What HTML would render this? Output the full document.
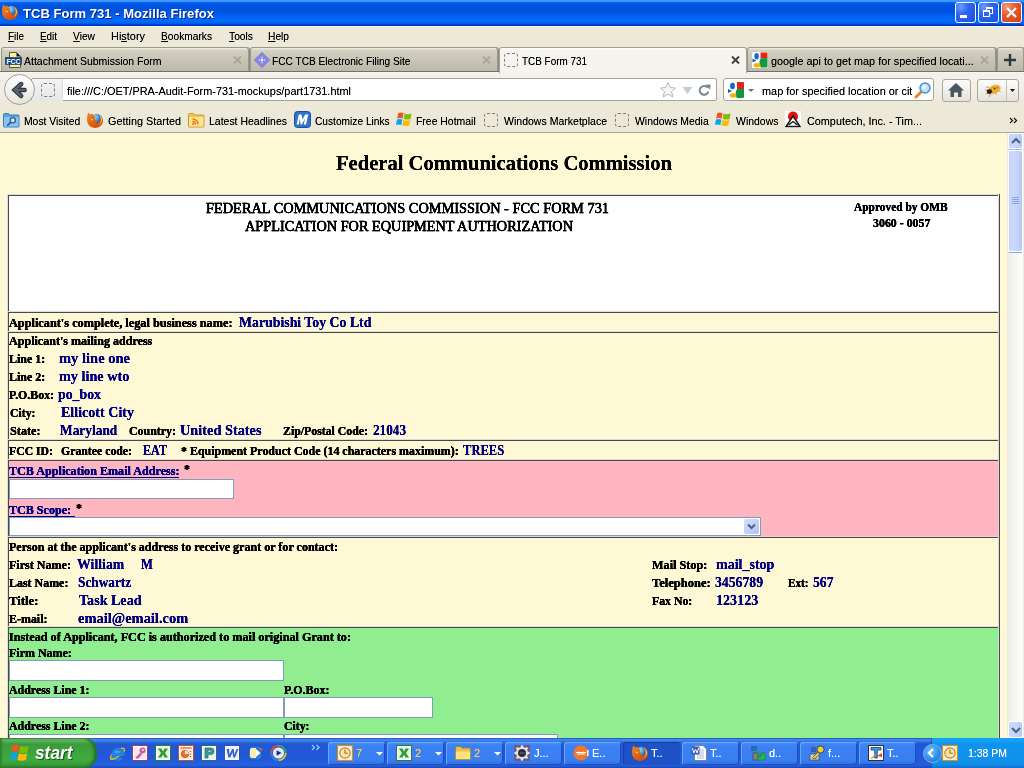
<!DOCTYPE html>
<html><head><meta charset="utf-8"><style>
html,body{margin:0;padding:0}
body{width:1024px;height:768px;overflow:hidden;position:relative;background:#ECE9D8;font-family:"Liberation Sans",sans-serif}
.a{position:absolute}
.tx{position:absolute;z-index:5;filter:url(#bo);white-space:pre;line-height:normal;transform-origin:0 0}
.tx u{text-decoration:underline}
.sf{-webkit-text-stroke:0.15px currentColor}
.ss{filter:url(#cr)}
/* title */
#title{left:0;top:0;width:1024px;height:26px;background:linear-gradient(to bottom,#4396ff 0,#3f92ff 1.5px,#0a6cff 2.2px,#005ee9 3px,#0055e0 5px,#0052dc 10px,#0057e4 13px,#0064f4 17px,#006bfd 20px,#0064f4 23px,#0052de 24px,#0034c4 25px,#0030c0 26px)}
.wb{position:absolute;top:2px;width:19px;height:19px;border:1px solid #fff;border-radius:3px;background:radial-gradient(circle at 25% 20%,#6f9cff 0,#2e67f0 35%,#1a4fdf 100%)}
#wclose{background:radial-gradient(circle at 25% 20%,#f59a7a 0,#e65a2e 40%,#d1400f 100%)}
/* menubar */
#menubar{left:0;top:26px;width:1024px;height:21px;background:linear-gradient(to bottom,#fcf8e8 0,#fcf8e8 1px,#ECE9D8 1px)}
/* tabs */
#tabbar{left:0;top:47px;width:1024px;height:25px;background:#ECE9D8}
.tab{position:absolute;top:47px;height:24px;border:1px solid #999789;border-bottom:none;border-radius:3px 3px 0 0;background:linear-gradient(to bottom,#ebe9de 0,#ebe9de 1px,#d4d1c3 2px,#c8c5b7 50%,#bcb9ab 100%);box-sizing:border-box;box-shadow:1px 0 0 #8e8c80}
#tabline{left:0;top:71px;width:1024px;height:1px;background:#73716a}
.tabsel{box-shadow:none;background:linear-gradient(to bottom,#fdfcf8 0,#fdfcf8 1px,#f5f4ee 2px);height:26px;border-color:#a3a193;z-index:2}
/* nav */
#nav{left:0;top:72px;width:1024px;height:35px;background:linear-gradient(to bottom,#fbfaf5 0,#f3f1ea 1px,#f1efe7 18px,#ECE9D8 30px)}
#bm{left:0;top:107px;width:1024px;height:25px;background:#ECE9D8}
#bmline{left:0;top:132px;width:1024px;height:1px;background:#aca899}
#content{left:0;top:133px;width:1007px;height:605px;background:#FFF8D4;overflow:hidden}
/* scrollbar */
#sb{left:1007px;top:133px;width:17px;height:605px;background:linear-gradient(to right,#ecebe3 0,#f4f3ee 35%,#fdfdfa 90%,#e9e9e1 100%)}
.sbb{position:absolute;left:2px;width:13px;border-radius:2px;background:linear-gradient(to right,#c3d2fa 0,#ccd9fc 30%,#c2d3fb 70%,#b0c6f8 100%);box-shadow:0 0 0 1px #fff}
/* taskbar */
#task{left:0;top:738px;width:1024px;height:30px;background:linear-gradient(to bottom,#2a5ccf 0,#2a5ccf 1px,#3c88e6 1px,#3b84e2 3px,#2d6cda 4px,#2157d5 6px,#2258d8 20px,#2461e0 27px,#1f52c8 29px,#1a45b0 30px)}
#start{left:0;top:738px;width:97px;height:30px;border-radius:0 13px 13px 0;background:linear-gradient(to bottom,#2f7d3a 0,#71b971 1px,#5cb05c 3px,#3a9b3a 6px,#3ea63e 16px,#40aa40 22px,#379a37 27px,#2c7f2c 30px);box-shadow:inset -3px 0 3px #22702a, inset 2px 0 2px #2a8a2a}
.tb{position:absolute;top:742px;height:23px;border-radius:3px;background:linear-gradient(to bottom,#4a8df8 0,#3c81f3 4px,#3a7ff1 18px,#306ee0 23px);box-shadow:inset 1px 1px 0 #6aa5ff,inset -1px -1px 0 #1d4fc4}
.tbact{background:#1e52c6;box-shadow:inset 1px 1px 1px #173f9c}
#tray{left:931px;top:738px;width:93px;height:30px;background:linear-gradient(to bottom,#1aa0f2 0,#14a4f6 2px,#0f94ee 6px,#1290e8 26px,#0f6fd0 30px);box-shadow:inset 1px 0 0 #1a5ac6}
/* table */
.hl{position:absolute;height:1px}
.vl{position:absolute;width:1px}
.inp{position:absolute;background:#fff;border:1px solid #7f9db9;box-sizing:border-box}
</style></head><body>
<svg width="0" height="0" style="position:absolute"><filter id="cr" x="-2%" y="-10%" width="104%" height="120%"><feComponentTransfer><feFuncA type="linear" slope="1.25" intercept="0"/></feComponentTransfer></filter><filter id="bo" x="-2%" y="-10%" width="104%" height="120%"><feComponentTransfer><feFuncA type="linear" slope="1.6" intercept="0"/></feComponentTransfer></filter></svg>
<div id="title" class="a"></div>
<div class="wb" style="left:955px"><div class="a" style="left:4px;top:12px;width:7px;height:3px;background:#fff"></div></div>
<div class="wb" style="left:978px"><div class="a" style="left:7px;top:4px;width:7px;height:7px;box-sizing:border-box;border:1px solid #fff;border-top-width:2px"></div><div class="a" style="left:4px;top:7px;width:7px;height:7px;box-sizing:border-box;border:1px solid #fff;border-top-width:2px;background:#3068ee"></div></div>
<div class="wb" id="wclose" style="left:1001px"><svg class="a" style="left:3px;top:3px" width="13" height="13"><path d="M2 2L11 11M11 2L2 11" stroke="#fff" stroke-width="2.2"/></svg></div>
<div id="menubar" class="a"></div>
<div id="tabbar" class="a"></div>
<div id="tabline" class="a"></div>
<div class="tab" style="left:1px;width:248px"></div>
<div class="tab" style="left:250px;width:248px"></div>
<div class="tab" style="left:747px;width:249px"></div>
<div class="tab" style="left:997px;width:27px"></div>
<div id="nav" class="a"></div>
<div class="tab tabsel" style="left:499px;width:248px"></div>
<svg class="a" style="left:233px;top:56px" width="10" height="8"><path d="M1 0.5L8 7.5M8 0.5L1 7.5" stroke="#a8a69c" stroke-width="1.9"/></svg>
<svg class="a" style="left:482px;top:56px" width="10" height="8"><path d="M1 0.5L8 7.5M8 0.5L1 7.5" stroke="#a8a69c" stroke-width="1.9"/></svg>
<svg class="a" style="left:731px;top:56px;z-index:4" width="10" height="8"><path d="M1 0.5L8 7.5M8 0.5L1 7.5" stroke="#3c3c3c" stroke-width="1.9"/></svg>
<svg class="a" style="left:980px;top:56px" width="10" height="8"><path d="M1 0.5L8 7.5M8 0.5L1 7.5" stroke="#a8a69c" stroke-width="1.9"/></svg>
<svg class="a" style="left:1003px;top:53px" width="14" height="14"><path d="M7 1V13M1 7H13" stroke="#2a3640" stroke-width="2.4"/></svg>
<!-- nav toolbar -->
<div class="a" style="left:31px;top:78px;width:684px;height:21px;border:1px solid #a6a397;border-radius:2px;background:#fff"></div>
<div class="a" style="left:32px;top:79px;width:30px;height:22px;background:linear-gradient(to bottom,#f4f4f4,#e6e6e6);border-right:1px solid #dcdcdc"></div>
<div class="a" style="left:4px;top:74px;width:29px;height:29px;border:1px solid #9f9d92;border-radius:50%;background:linear-gradient(to bottom,#ffffff 0,#f4f3ef 45%,#e6e4dc 100%)"></div>
<svg class="a" style="left:8px;top:78px" width="24" height="24" viewBox="0 0 24 24"><path d="M13.2 6L6.6 12L13.2 18M8.5 12H16.6" stroke="#202a33" stroke-width="4.4" fill="none" stroke-linecap="round" stroke-linejoin="miter"/><path d="M13.2 6L6.6 12L13.2 18M8.5 12H16.5" stroke="#56636e" stroke-width="2.6" fill="none" stroke-linecap="round" stroke-linejoin="miter"/></svg>
<svg class="a" style="left:659px;top:81px" width="18" height="18" viewBox="0 0 18 18"><path d="M9 1.5L11.2 6.5L16.5 7L12.5 10.5L13.8 16L9 13.2L4.2 16L5.5 10.5L1.5 7L6.8 6.5Z" fill="#f6f6f4" stroke="#b9bab6" stroke-width="1"/></svg>
<svg class="a" style="left:682px;top:86px" width="11" height="9"><path d="M0.5 1H10.5L5.5 8Z" fill="#c5cbd3"/></svg>
<svg class="a" style="left:698px;top:84px" width="13" height="12" viewBox="0 0 13 12"><path d="M9.6 3.6A4.4 4.4 0 1 0 10.4 7.4" stroke="#7a8791" stroke-width="2" fill="none"/><path d="M7.2 0.8L12.6 0.4L12.2 5.8Z" fill="#7a8791"/></svg>
<div class="a" style="left:723px;top:78px;width:209px;height:21px;border:1px solid #a6a397;border-radius:3px;background:#fff"></div>
<svg class="a" style="left:728px;top:82px" width="16" height="16" viewBox="0 0 16 16"><path d="M9 0H15Q16 0 16 1V7H9Z" fill="#e4231b"/><path d="M9 7H16V15Q16 16 15 16H9Q6 12 9 7Z" fill="#12963f"/><ellipse cx="4.5" cy="4" rx="2.4" ry="3.2" fill="#1066d2"/><path d="M0 7L4 9L0 11Z" fill="#1a5ab8"/><ellipse cx="5" cy="13.5" rx="3.3" ry="2.2" fill="#f2b50c"/></svg>
<svg class="a" style="left:748px;top:89px" width="6" height="3"><path d="M0 0H6L3 3Z" fill="#707070"/></svg>
<svg class="a" style="left:914px;top:81px" width="18" height="18" viewBox="0 0 18 18"><path d="M7 11L2 16" stroke="#e3862c" stroke-width="3" stroke-linecap="round"/><circle cx="11" cy="7" r="5" fill="#bfe2fb" stroke="#4a8fcc" stroke-width="1.5"/><circle cx="10" cy="6" r="2" fill="#eaf6ff"/></svg>
<div class="a" style="left:942px;top:79px;width:27px;height:21px;border:1px solid #aaa89c;border-radius:3px;background:linear-gradient(to bottom,#fdfcfa 0,#f1f0ea 50%,#e4e2d9 100%)"></div>
<svg class="a" style="left:948px;top:83px" width="16" height="14" viewBox="0 0 16 14"><path d="M8 0L16 7.5H13.5V14H10V9.5H6V14H2.5V7.5H0Z" fill="#4a5560"/></svg>
<div class="a" style="left:977px;top:79px;width:40px;height:21px;border:1px solid #aaa89c;border-radius:3px;background:linear-gradient(to bottom,#fdfcfa 0,#f1f0ea 50%,#e4e2d9 100%)"></div>
<div class="a" style="left:1006px;top:80px;width:1px;height:21px;background:#c4c2b7"></div>
<svg class="a" style="left:984px;top:82px" width="18" height="16" viewBox="0 0 18 16"><path d="M3.5 8.5L0.8 7.6M4.2 10.8L1.6 12.2M6.4 11.6L5.4 14.8M14.4 8.6L16.6 9.6M11.6 10.8L12.4 12.6M5 5.4L1.8 5" stroke="#8a8a80" stroke-width="0.8"/><ellipse cx="10.2" cy="7.4" rx="6.4" ry="4" transform="rotate(-22 10.2 7.4)" fill="#f0a020" stroke="#e8c040" stroke-width="0.6"/><ellipse cx="11.5" cy="6.4" rx="3.4" ry="2" transform="rotate(-22 11.5 6.4)" fill="#f6b84a"/><ellipse cx="5.4" cy="9.6" rx="2.6" ry="2.3" fill="#3a1c08"/><circle cx="10.6" cy="6.6" r="1.1" fill="#7a3610"/><circle cx="13.2" cy="5.8" r="0.8" fill="#8a4012"/><circle cx="8.4" cy="5.4" r="0.7" fill="#b0a090"/></svg>
<svg class="a" style="left:1010px;top:89px" width="5" height="3"><path d="M0 0H5L2.5 3Z" fill="#111"/></svg>
<div id="bm" class="a"></div>
<div id="bmline" class="a"></div>
<svg class="a" style="left:3px;top:112px;z-index:4" width="17" height="16" viewBox="0 0 17 16"><path d="M0.5 14.5V2.5Q0.5 1.5 1.5 1.5H5.5L6.5 3H15Q16 3 16 4V14.5Q16 15 15.5 15H1Q0.5 15 0.5 14.5Z" fill="#5aa2e0" stroke="#3c7fc0" stroke-width="1"/><path d="M1 5H15.5V14.5H1Z" fill="#88c2f0"/><circle cx="9.8" cy="8.2" r="2.6" fill="#cfe6fa" stroke="#2f5e8e" stroke-width="1.3"/><path d="M7.9 10.1L4.2 13.6" stroke="#2f5e8e" stroke-width="1.8"/></svg>
<svg class="a" style="left:87px;top:112px;z-index:4" width="16" height="16" viewBox="0 0 16 16"><defs><radialGradient id="gl87_112" cx="0.35" cy="0.3" r="0.8"><stop offset="0" stop-color="#9fe0fb"/><stop offset="0.5" stop-color="#3b8fd6"/><stop offset="1" stop-color="#163f8c"/></radialGradient><linearGradient id="fx87_112" x1="0" y1="0" x2="1" y2="1"><stop offset="0" stop-color="#f28a1e"/><stop offset="0.6" stop-color="#de5a12"/><stop offset="1" stop-color="#c8400c"/></linearGradient></defs><circle cx="9.5" cy="7" r="5.2" fill="url(#gl87_112)"/><path d="M1.2 0.6L3.2 2.6L5.6 1.8L6.6 3.8L8.6 4.6L7.6 6.4L8.4 8.6L10.6 9.6L9.4 11.4C12 11.4 13.8 9.6 13.6 6.8C13.5 5 12.6 3.6 11.4 2.6C14.2 3.2 16 5.8 16 8.6C16 12.8 12.6 16 8.2 16C3.6 16 0 12.4 0 8C0 5.4 0.4 2.8 1.2 0.6Z" fill="url(#fx87_112)"/><path d="M12 3C14 4 15.2 6 15 8.6C14.6 11 13 12.6 11 13.2C13.2 11.6 14.2 9.4 13.8 7C13.6 5.4 13 4 12 3Z" fill="#f9c743"/><path d="M3 6.5L6.2 7.4L5.2 8.4Z" fill="#ffd9a0"/></svg>
<svg class="a" style="left:188px;top:112px;z-index:4" width="17" height="16" viewBox="0 0 17 16"><path d="M0.5 14.5V2.5Q0.5 1.5 1.5 1.5H5.5L6.5 3H15Q16 3 16 4V14.5Q16 15 15.5 15H1Q0.5 15 0.5 14.5Z" fill="#f0c64e" stroke="#c8982a" stroke-width="1"/><path d="M1 5H15.5V14.5H1Z" fill="#fde394"/><path d="M4.5 7A5.5 5.5 0 0 1 10 12.5M4.5 9.5A3 3 0 0 1 7.5 12.5" stroke="#e8770e" stroke-width="1.4" fill="none"/><circle cx="5" cy="12" r="1.1" fill="#e8770e"/></svg>
<svg class="a" style="left:294px;top:111px;z-index:4" width="17" height="17" viewBox="0 0 17 17"><rect x="0.5" y="0.5" width="16" height="16" rx="3" fill="#2f74cc" stroke="#1b4f96"/><path d="M2.6 13.6L4.8 3.4H7.6L8.4 8.6L11.2 3.4H14.2L12 13.6H9.8L11 7.6L7.8 13.6H6.6L5.8 7.6L4.8 13.6Z" fill="#fff"/></svg>
<svg class="a" style="left:396px;top:112px;z-index:4" width="16" height="15" viewBox="0 0 16 15"><path d="M2.2 1.2Q4.6 0 7.6 1.2L6.6 6.6Q3.8 5.4 1.2 6.6Z" fill="#f35325"/><path d="M8.6 1.6Q11.6 2.8 15.6 1.6L14.6 7Q11.2 8.2 7.6 7Z" fill="#81bc06"/><path d="M1 7.6Q3.8 6.4 6.4 7.6L5.4 13Q2.6 11.8 0 13Z" fill="#05a6f0"/><path d="M7.4 8Q10.8 9.2 14.4 8L13.4 13.4Q10 14.6 6.4 13.4Z" fill="#ffba08"/></svg>
<div class="a" style="left:484px;top:113px;width:14px;height:14px;box-sizing:border-box;border:1px dashed #7d7d7d;border-radius:3px;z-index:4"></div>
<div class="a" style="left:615px;top:113px;width:14px;height:14px;box-sizing:border-box;border:1px dashed #7d7d7d;border-radius:3px;z-index:4"></div>
<svg class="a" style="left:715px;top:112px;z-index:4" width="16" height="15" viewBox="0 0 16 15"><path d="M2.2 1.2Q4.6 0 7.6 1.2L6.6 6.6Q3.8 5.4 1.2 6.6Z" fill="#f35325"/><path d="M8.6 1.6Q11.6 2.8 15.6 1.6L14.6 7Q11.2 8.2 7.6 7Z" fill="#81bc06"/><path d="M1 7.6Q3.8 6.4 6.4 7.6L5.4 13Q2.6 11.8 0 13Z" fill="#05a6f0"/><path d="M7.4 8Q10.8 9.2 14.4 8L13.4 13.4Q10 14.6 6.4 13.4Z" fill="#ffba08"/></svg>
<svg class="a" style="left:785px;top:111px;z-index:4" width="16" height="17" viewBox="0 0 16 17"><rect width="16" height="17" fill="#fff"/><circle cx="8" cy="5.5" r="5" fill="#e8100a"/><path d="M8 5L15 15.5H1Z" fill="#fff" stroke="#111" stroke-width="1.5" stroke-linejoin="miter"/><path d="M3.5 14L8 10.5L12.5 14" stroke="#111" stroke-width="1.3" fill="none"/></svg>
<svg class="a" style="left:1009px;top:117px;z-index:4" width="9" height="7" viewBox="0 0 9 7"><path d="M1 1L3.6 3.5L1 6M5 1L7.6 3.5L5 6" stroke="#111" stroke-width="1.15" fill="none"/></svg>
<!-- content -->
<div id="content" class="a"></div>
<!-- table -->
<div class="a" style="left:9px;top:196px;width:989px;height:115px;background:#fff"></div>
<div class="a" style="left:9px;top:461px;width:989px;height:75px;background:#FFB6C1"></div>
<div class="a" style="left:9px;top:628px;width:989px;height:110px;background:#90EE90"></div>
<div class="hl" style="left:7px;top:194px;width:993px;background:#dcdce0"></div>
<div class="vl" style="left:7px;top:194px;height:544px;background:#dcdce0"></div>
<div class="vl" style="left:999px;top:194px;height:544px;background:#484848"></div>
<div class="vl" style="left:8px;top:195px;height:543px;background:#484848"></div>
<div class="hl" style="left:8px;top:195px;width:990px;background:#484848"></div>
<div class="hl" style="left:8px;top:312px;width:990px;background:#484848"></div>
<div class="hl" style="left:8px;top:332px;width:990px;background:#484848"></div>
<div class="hl" style="left:8px;top:440px;width:990px;background:#484848"></div>
<div class="hl" style="left:8px;top:460px;width:990px;background:#484848"></div>
<div class="hl" style="left:8px;top:537px;width:990px;background:#484848"></div>
<div class="hl" style="left:8px;top:627px;width:990px;background:#484848"></div>
<div class="hl" style="left:8px;top:311px;width:991px;background:#dcdce0"></div>
<div class="hl" style="left:8px;top:331px;width:991px;background:#dcdce0"></div>
<div class="hl" style="left:8px;top:439px;width:991px;background:#dcdce0"></div>
<div class="hl" style="left:8px;top:459px;width:991px;background:#dcdce0"></div>
<div class="hl" style="left:8px;top:536px;width:991px;background:#dcdce0"></div>
<div class="hl" style="left:8px;top:626px;width:991px;background:#dcdce0"></div>
<div class="vl" style="left:998px;top:196px;height:542px;background:#dcdce0"></div>
<div class="a" style="left:9px;top:477px;width:170px;height:1px;background:#000080;z-index:5"></div>
<div class="a" style="left:9px;top:516px;width:66px;height:1px;background:#000080;z-index:5"></div>
<!-- inputs -->
<div class="inp" style="left:9px;top:479px;width:225px;height:20px"></div>
<div class="inp" style="left:9px;top:517px;width:752px;height:19px"></div>
<div class="a" style="left:744px;top:519px;width:15px;height:15px;border-radius:2px;background:linear-gradient(135deg,#d3defc 0,#bfcff8 60%,#aec3f4 100%)"></div>
<svg class="a" style="left:747px;top:523px" width="9" height="7"><path d="M1 1.5L4.5 5L8 1.5" stroke="#4d6185" stroke-width="2" fill="none"/></svg>
<div class="inp" style="left:9px;top:660px;width:275px;height:21px"></div>
<div class="inp" style="left:9px;top:697px;width:275px;height:21px"></div>
<div class="inp" style="left:284px;top:697px;width:149px;height:21px"></div>
<div class="inp" style="left:9px;top:734px;width:275px;height:21px"></div>
<div class="inp" style="left:284px;top:734px;width:274px;height:21px"></div>
<!-- scrollbar -->
<div id="sb" class="a"></div>
<div class="sbb" style="left:1009px;top:134px;height:14px"></div>
<svg class="a" style="left:1011px;top:137px" width="10" height="8"><path d="M1 6L5 2L9 6" stroke="#4d6185" stroke-width="2" fill="none"/></svg>
<div class="a" style="left:1009px;top:149px;width:13px;height:1px;background:#9fb6e6"></div>
<div class="sbb" style="left:1009px;top:151px;height:100px"></div>
<div class="a" style="left:1009px;top:252px;width:13px;height:1px;background:#8ea8dc"></div>
<svg class="a" style="left:1012px;top:197px" width="7" height="8"><path d="M0 0.5H7M0 2.5H7M0 4.5H7M0 6.5H7" stroke="#8ba3e0" stroke-width="1"/></svg>
<div class="sbb" style="left:1009px;top:722px;height:15px"></div>
<svg class="a" style="left:1011px;top:726px" width="10" height="8"><path d="M1 2L5 6L9 2" stroke="#4d6185" stroke-width="2" fill="none"/></svg>
<!-- taskbar -->
<div id="task" class="a"></div>
<div id="start" class="a"></div>
<svg class="a" style="left:311px;top:744px" width="10" height="7" viewBox="0 0 10 7"><path d="M1 1L3.5 3.5L1 6M5.5 1L8 3.5L5.5 6" stroke="#8cc8f2" stroke-width="1.4" fill="none"/></svg>
<!-- task buttons -->
<div class="tb" style="left:328px;width:57px"></div>
<div class="tb" style="left:387px;width:57px"></div>
<div class="tb" style="left:446px;width:57px"></div>
<div class="tb" style="left:505px;width:57px"></div>
<div class="tb" style="left:564px;width:57px"></div>
<div class="tb tbact" style="left:623px;width:57px"></div>
<div class="tb" style="left:682px;width:57px"></div>
<div class="tb" style="left:741px;width:57px"></div>
<div class="tb" style="left:800px;width:57px"></div>
<div class="tb" style="left:859px;width:57px"></div>
<div id="tray" class="a"></div>
<div class="a" style="left:923px;top:744px;width:17px;height:17px;border-radius:50%;background:radial-gradient(circle at 40% 35%,#6fc0ff 0,#2a8ae8 60%,#1d5fc0 100%);border:1px solid #8ab0e0"></div>
<svg class="a" style="left:927px;top:748px" width="9" height="10"><path d="M6 1L2 5L6 9" stroke="#fff" stroke-width="2.2" fill="none"/></svg>
<svg class="a" style="left:2px;top:4px;z-index:4" width="16" height="16" viewBox="0 0 16 16"><defs><radialGradient id="gl2_4" cx="0.35" cy="0.3" r="0.8"><stop offset="0" stop-color="#9fe0fb"/><stop offset="0.5" stop-color="#3b8fd6"/><stop offset="1" stop-color="#163f8c"/></radialGradient><linearGradient id="fx2_4" x1="0" y1="0" x2="1" y2="1"><stop offset="0" stop-color="#f28a1e"/><stop offset="0.6" stop-color="#de5a12"/><stop offset="1" stop-color="#c8400c"/></linearGradient></defs><circle cx="9.5" cy="7" r="5.2" fill="url(#gl2_4)"/><path d="M1.2 0.6L3.2 2.6L5.6 1.8L6.6 3.8L8.6 4.6L7.6 6.4L8.4 8.6L10.6 9.6L9.4 11.4C12 11.4 13.8 9.6 13.6 6.8C13.5 5 12.6 3.6 11.4 2.6C14.2 3.2 16 5.8 16 8.6C16 12.8 12.6 16 8.2 16C3.6 16 0 12.4 0 8C0 5.4 0.4 2.8 1.2 0.6Z" fill="url(#fx2_4)"/><path d="M12 3C14 4 15.2 6 15 8.6C14.6 11 13 12.6 11 13.2C13.2 11.6 14.2 9.4 13.8 7C13.6 5.4 13 4 12 3Z" fill="#f9c743"/><path d="M3 6.5L6.2 7.4L5.2 8.4Z" fill="#ffd9a0"/></svg>
<svg class="a" style="left:5px;top:51px;z-index:4" width="17" height="18" viewBox="0 0 17 18"><path d="M4.5 1.5H11.5L15.5 5.5V16.5H4.5Z" fill="#fbf38c" stroke="#55554a" stroke-width="1"/><path d="M11.5 1.5L15.5 5.5H11.5Z" fill="#111"/><rect x="0.5" y="6.5" width="16" height="7" fill="#0e3f86" stroke="#0a2f66" stroke-width="0.6"/><text x="1.4" y="12.9" font-family="Liberation Sans" font-weight="bold" font-size="7.4" fill="#fff" textLength="14.2" lengthAdjust="spacingAndGlyphs">FCC</text></svg>
<svg class="a" style="left:254px;top:52px;z-index:4" width="16" height="16" viewBox="0 0 16 16"><defs><clipPath id="dc254_52"><path d="M8 0L16 8L8 16L0 8Z"/></clipPath></defs><path d="M8 0L16 8L8 16L0 8Z" fill="#5c5cc8"/><g clip-path="url(#dc254_52)" stroke="#9a9ae8" stroke-width="0.7"><path d="M-8 0L8 16"/><path d="M-8 16L8 0"/><path d="M-6 0L10 16"/><path d="M-6 16L10 0"/><path d="M-4 0L12 16"/><path d="M-4 16L12 0"/><path d="M-2 0L14 16"/><path d="M-2 16L14 0"/><path d="M0 0L16 16"/><path d="M0 16L16 0"/><path d="M2 0L18 16"/><path d="M2 16L18 0"/><path d="M4 0L20 16"/><path d="M4 16L20 0"/><path d="M6 0L22 16"/><path d="M6 16L22 0"/><path d="M8 0L24 16"/><path d="M8 16L24 0"/></g><circle cx="8" cy="8" r="1.3" fill="#f0f0ff"/><circle cx="5.5" cy="8" r="0.8" fill="#e0e0ff"/><circle cx="10.5" cy="8" r="0.8" fill="#e0e0ff"/><circle cx="8" cy="5.5" r="0.8" fill="#e0e0ff"/><circle cx="8" cy="10.5" r="0.8" fill="#e0e0ff"/></svg>
<div class="a" style="left:504px;top:53px;width:14px;height:14px;box-sizing:border-box;border:1px dashed #7d7d7d;border-radius:3px;z-index:4"></div>
<svg class="a" style="left:752px;top:52px;z-index:4" width="16" height="16" viewBox="0 0 16 16"><rect width="16" height="16" rx="1.5" fill="#fff"/><path d="M8.5 0.5H14.5Q15.5 0.5 15.5 1.5V6.5H8.5Z" fill="#e4231b"/><path d="M8.8 6.2H15.5V14.5Q15.5 15.5 14.5 15.5H8.8Q6 11 8.8 6.2Z" fill="#109a43"/><ellipse cx="4.6" cy="4.2" rx="2.2" ry="3.2" fill="#1967d2"/><path d="M0.5 6.5L4.5 8.8L0.5 10.2Z" fill="#1a56b0"/><ellipse cx="5" cy="13.3" rx="3.4" ry="2.2" fill="#f4b400"/></svg>
<div class="a" style="left:41px;top:83px;width:14px;height:14px;box-sizing:border-box;border:1px dashed #7d7d7d;border-radius:3px;z-index:4"></div>
<svg class="a" style="left:10px;top:744px;z-index:4" width="19" height="18" viewBox="0 0 16 15"><path d="M2.2 1.2Q4.6 0 7.6 1.2L6.6 6.6Q3.8 5.4 1.2 6.6Z" fill="#f35325"/><path d="M8.6 1.6Q11.6 2.8 15.6 1.6L14.6 7Q11.2 8.2 7.6 7Z" fill="#81bc06"/><path d="M1 7.6Q3.8 6.4 6.4 7.6L5.4 13Q2.6 11.8 0 13Z" fill="#05a6f0"/><path d="M7.4 8Q10.8 9.2 14.4 8L13.4 13.4Q10 14.6 6.4 13.4Z" fill="#ffba08"/></svg>
<svg class="a" style="left:109px;top:745px;z-index:4" width="17" height="16" viewBox="0 0 17 16"><ellipse cx="8.5" cy="8.5" rx="8.2" ry="2.8" transform="rotate(-35 8.5 8.5)" fill="none" stroke="#f0b422" stroke-width="1.3"/><path d="M4 9.2H14A5 5 0 1 0 12.6 12.8" stroke="#1a86e0" stroke-width="3" fill="none"/><path d="M6 7H11.4" stroke="#8fd2fa" stroke-width="0.9"/><path d="M1.2 13.6Q3 15.6 8 12.4" stroke="#f0b422" stroke-width="1.3" fill="none"/></svg>
<svg class="a" style="left:132px;top:745px;z-index:4" width="16" height="16" viewBox="0 0 16 16"><rect x="0.5" y="0.5" width="15" height="15" fill="#f6e6ee" stroke="#9b3b6e"/><rect x="1.5" y="1.5" width="13" height="13" fill="none" stroke="#fff" stroke-width="0.8" opacity="0.7"/><circle cx="10.5" cy="5.5" r="3" fill="#c0649a"/><path d="M8.5 7.5L3.5 12.5L5 14L6 13L7 13.5L7.5 12L10 9.5" fill="#c0649a"/><circle cx="10.8" cy="5" r="1" fill="#f6e6ee"/></svg>
<svg class="a" style="left:155px;top:745px;z-index:4" width="16" height="16" viewBox="0 0 16 16"><rect x="0.5" y="0.5" width="15" height="15" fill="#e8f4e6" stroke="#2d7a32"/><rect x="1.5" y="1.5" width="13" height="13" fill="none" stroke="#fff" stroke-width="0.8" opacity="0.7"/><path d="M3 3.5H6.5L8 6.5L9.5 3.5H13L10 8L13 12.5H9.5L8 9.5L6.5 12.5H3L6 8Z" fill="#2e9a3a"/></svg>
<svg class="a" style="left:178px;top:745px;z-index:4" width="16" height="16" viewBox="0 0 16 16"><rect x="0.5" y="0.5" width="15" height="15" fill="#fde8d8" stroke="#c44f18"/><rect x="1.5" y="1.5" width="13" height="13" fill="none" stroke="#fff" stroke-width="0.8" opacity="0.7"/><path d="M2.5 3H13.5" stroke="#c44f18"/><circle cx="7" cy="9" r="3.6" fill="#e8782e" stroke="#b84410" stroke-width="0.8"/><path d="M7 5.4V9H10.6A3.6 3.6 0 0 0 7 5.4Z" fill="#fde0c8"/><path d="M12 6.5H13M12 9H13M12 11.5H13" stroke="#b84410" stroke-width="1.2"/></svg>
<svg class="a" style="left:201px;top:745px;z-index:4" width="16" height="16" viewBox="0 0 16 16"><rect x="0.5" y="0.5" width="15" height="15" fill="#e4f2f0" stroke="#2c6e70"/><rect x="1.5" y="1.5" width="13" height="13" fill="none" stroke="#fff" stroke-width="0.8" opacity="0.7"/><path d="M4 3H9.5Q13 3 13 6.3Q13 9.6 9.5 9.6H7V13H4ZM7 5.3V7.3H9.3Q10 7.3 10 6.3Q10 5.3 9.3 5.3Z" fill="#3c9a98" stroke="#1e5e60" stroke-width="0.6"/></svg>
<svg class="a" style="left:224px;top:745px;z-index:4" width="16" height="16" viewBox="0 0 16 16"><rect x="0.5" y="0.5" width="15" height="15" fill="#eef2fc" stroke="#3052a8"/><rect x="1.5" y="1.5" width="13" height="13" fill="none" stroke="#fff" stroke-width="0.8" opacity="0.7"/><path d="M2.5 4H5L5.6 9.5L8 4H9.8L10.4 9.5L12.6 4H14.5L11 12.5H9.2L8.6 7.5L6.2 12.5H4.4Z" fill="#3a62c8"/></svg>
<svg class="a" style="left:247px;top:745px;z-index:4" width="16" height="16" viewBox="0 0 16 16"><path d="M2 4Q2 1 5 1H12Q15 1 15 4V11Q15 15 11 15H5Q1 15 1 11Z" fill="#2a78dc" stroke="#1a4ea8" stroke-width="0.8"/><path d="M3 5Q3 3 5 3H9V13H5Q3 13 3 11Z" fill="#fbeeb0"/><path d="M9 4L13.5 8L9 12" fill="#fff"/><circle cx="14.2" cy="4.2" r="1.3" fill="#f05a28"/></svg>
<svg class="a" style="left:270px;top:745px;z-index:4" width="17" height="16" viewBox="0 0 17 16"><circle cx="8.5" cy="8" r="7.3" fill="none" stroke="#3cb04a" stroke-width="1.6"/><path d="M8.5 0.7A7.3 7.3 0 0 0 1.2 8" stroke="#e8423a" stroke-width="1.6" fill="none"/><path d="M15.8 8A7.3 7.3 0 0 1 8.5 15.3" stroke="#f4c020" stroke-width="1.6" fill="none"/><path d="M1.2 8A7.3 7.3 0 0 0 8.5 15.3" stroke="#2f7ae0" stroke-width="1.6" fill="none"/><circle cx="8.5" cy="8" r="5.6" fill="#e8eef8"/><circle cx="8.5" cy="8" r="4.2" fill="#dfe6f2"/><path d="M6.6 5.2L11.6 8L6.6 10.8Z" fill="#1c2f7c"/></svg>
<svg class="a" style="left:337px;top:745px;z-index:4" width="16" height="16" viewBox="0 0 16 16"><rect x="0.5" y="0.5" width="15" height="15" fill="#fdf4de" stroke="#e08a10" stroke-width="1.2"/><circle cx="8" cy="8" r="5.2" fill="#f9e6b0" stroke="#c68420" stroke-width="1.2"/><path d="M8 4.5V8.3H10.8" stroke="#a86810" stroke-width="1.1" fill="none"/></svg>
<svg class="a" style="left:396px;top:745px;z-index:4" width="16" height="16" viewBox="0 0 16 16"><rect x="0.5" y="0.5" width="15" height="15" fill="#e8f4e6" stroke="#2d7a32"/><rect x="1.5" y="1.5" width="13" height="13" fill="none" stroke="#fff" stroke-width="0.8" opacity="0.7"/><path d="M3 3.5H6.5L8 6.5L9.5 3.5H13L10 8L13 12.5H9.5L8 9.5L6.5 12.5H3L6 8Z" fill="#2e9a3a"/></svg>
<svg class="a" style="left:455px;top:745px;z-index:4" width="16" height="16" viewBox="0 0 16 16"><path d="M0.5 14V2.5Q0.5 1.5 1.5 1.5H6L7 3H14.5Q15.5 3 15.5 4V14Q15.5 14.5 15 14.5H1Q0.5 14.5 0.5 14Z" fill="#e8c050" stroke="#9a7a20" stroke-width="0.8"/><path d="M0.8 6.5H15.2V14.2H0.8Z" fill="#fbe27a"/></svg>
<svg class="a" style="left:514px;top:745px;z-index:4" width="16" height="16" viewBox="0 0 16 16"><rect width="16" height="16" fill="#6b5a8a"/><circle cx="8" cy="8" r="6" fill="#e8e8e8"/><circle cx="14.40" cy="8.00" r="1.3" fill="#e8e8e8"/><circle cx="12.53" cy="12.53" r="1.3" fill="#e8e8e8"/><circle cx="8.00" cy="14.40" r="1.3" fill="#e8e8e8"/><circle cx="3.47" cy="12.53" r="1.3" fill="#e8e8e8"/><circle cx="1.60" cy="8.00" r="1.3" fill="#e8e8e8"/><circle cx="3.47" cy="3.47" r="1.3" fill="#e8e8e8"/><circle cx="8.00" cy="1.60" r="1.3" fill="#e8e8e8"/><circle cx="12.53" cy="3.47" r="1.3" fill="#e8e8e8"/><circle cx="8" cy="8" r="4" fill="#2b2b3a"/><path d="M5.5 8H10.5" stroke="#777" stroke-width="1"/></svg>
<svg class="a" style="left:573px;top:745px;z-index:4" width="16" height="16" viewBox="0 0 16 16"><circle cx="8" cy="8" r="7.5" fill="#f0782a"/><path d="M3 7.5H13M4 9H12" stroke="#fff" stroke-width="1"/><path d="M6 6.5L7 7.5M10 6.5L9 7.5" stroke="#fff" stroke-width="0.8"/><rect x="14" y="5" width="1.6" height="6" fill="#f7f0e8"/></svg>
<svg class="a" style="left:632px;top:745px;z-index:4" width="16" height="16" viewBox="0 0 16 16"><defs><radialGradient id="gl632_745" cx="0.35" cy="0.3" r="0.8"><stop offset="0" stop-color="#9fe0fb"/><stop offset="0.5" stop-color="#3b8fd6"/><stop offset="1" stop-color="#163f8c"/></radialGradient><linearGradient id="fx632_745" x1="0" y1="0" x2="1" y2="1"><stop offset="0" stop-color="#f28a1e"/><stop offset="0.6" stop-color="#de5a12"/><stop offset="1" stop-color="#c8400c"/></linearGradient></defs><circle cx="9.5" cy="7" r="5.2" fill="url(#gl632_745)"/><path d="M1.2 0.6L3.2 2.6L5.6 1.8L6.6 3.8L8.6 4.6L7.6 6.4L8.4 8.6L10.6 9.6L9.4 11.4C12 11.4 13.8 9.6 13.6 6.8C13.5 5 12.6 3.6 11.4 2.6C14.2 3.2 16 5.8 16 8.6C16 12.8 12.6 16 8.2 16C3.6 16 0 12.4 0 8C0 5.4 0.4 2.8 1.2 0.6Z" fill="url(#fx632_745)"/><path d="M12 3C14 4 15.2 6 15 8.6C14.6 11 13 12.6 11 13.2C13.2 11.6 14.2 9.4 13.8 7C13.6 5.4 13 4 12 3Z" fill="#f9c743"/><path d="M3 6.5L6.2 7.4L5.2 8.4Z" fill="#ffd9a0"/></svg>
<svg class="a" style="left:691px;top:745px;z-index:4" width="16" height="16" viewBox="0 0 16 16"><path d="M3.5 0.5H12L15.5 4V15.5H3.5Z" fill="#fff" stroke="#808080"/><path d="M6 5H13M6 7H13M6 9H13M6 11H13M6 13H13" stroke="#9aa8c8" stroke-width="0.8"/><rect x="0.5" y="1.5" width="8" height="8" fill="#3a5ab8"/><path d="M1.5 3L2.8 8L4.5 4.5L6.2 8L7.5 3" stroke="#fff" stroke-width="1" fill="none"/></svg>
<svg class="a" style="left:750px;top:745px;z-index:4" width="16" height="16" viewBox="0 0 16 16"><rect x="1" y="1" width="6" height="5" fill="#2a62c8"/><rect x="3" y="8" width="5" height="7" fill="#808080" stroke="#404040" stroke-width="0.6"/><path d="M5 4L12 11V7.5H15V15H7.5V12H11L4 5Z" fill="#2ab84a" stroke="#17802e" stroke-width="0.6"/></svg>
<svg class="a" style="left:809px;top:745px;z-index:4" width="16" height="16" viewBox="0 0 16 16"><rect x="1" y="9" width="9" height="6" fill="#d8d0b8" stroke="#505050" stroke-width="0.8"/><circle cx="11.5" cy="4.5" r="3.5" fill="#f0d030" stroke="#303030" stroke-width="0.8"/><path d="M9 7L3.5 12.5L5 14L6 13L7 13.5L7.5 12L10 9.5" fill="#f0d030" stroke="#303030" stroke-width="0.6"/><rect x="2" y="2" width="5" height="5" fill="#3060c0"/></svg>
<svg class="a" style="left:868px;top:745px;z-index:4" width="16" height="16" viewBox="0 0 16 16"><rect x="0.5" y="0.5" width="15" height="15" fill="#fff" stroke="#303030"/><path d="M3 2.5H13V5H9.3V13H6.7V5H3Z" fill="#3aa0e8" stroke="#102050" stroke-width="0.7"/><path d="M9 11L14 8L14 12Z" fill="#e84020"/><path d="M3 14L7 10" stroke="#f0a020" stroke-width="1.5"/></svg>
<svg class="a" style="left:942px;top:745px;z-index:4" width="16" height="16" viewBox="0 0 16 16"><rect x="0.5" y="0.5" width="15" height="15" fill="#fdf4de" stroke="#e08a10" stroke-width="1.2"/><circle cx="8" cy="8" r="5.2" fill="#f9e6b0" stroke="#c68420" stroke-width="1.2"/><path d="M8 4.5V8.3H10.8" stroke="#a86810" stroke-width="1.1" fill="none"/></svg>
<svg class="a" style="left:376px;top:752px;z-index:4" width="7" height="4" viewBox="0 0 7 4"><path d="M0 0H7L3.5 3.5Z" fill="#fff"/></svg>
<svg class="a" style="left:435px;top:752px;z-index:4" width="7" height="4" viewBox="0 0 7 4"><path d="M0 0H7L3.5 3.5Z" fill="#fff"/></svg>
<svg class="a" style="left:494px;top:752px;z-index:4" width="7" height="4" viewBox="0 0 7 4"><path d="M0 0H7L3.5 3.5Z" fill="#fff"/></svg>
<div class="tx ss" style="left:22.5px;top:6.00px;font:bold 13px 'Liberation Sans', sans-serif;color:#fff;transform:scaleX(1.0053);text-shadow:1px 1px 0 #0a1e7a;filter:none;">TCB Form 731 - Mozilla Firefox</div>
<div class="tx ss" style="left:7.5px;top:30.00px;font:normal 11px 'Liberation Sans', sans-serif;color:#000;transform:scaleX(0.9014);"><u>F</u>ile</div>
<div class="tx ss" style="left:40.0px;top:30.00px;font:normal 11px 'Liberation Sans', sans-serif;color:#000;transform:scaleX(0.8962);"><u>E</u>dit</div>
<div class="tx ss" style="left:73.0px;top:30.00px;font:normal 11px 'Liberation Sans', sans-serif;color:#000;transform:scaleX(0.9300);"><u>V</u>iew</div>
<div class="tx ss" style="left:111.0px;top:30.00px;font:normal 11px 'Liberation Sans', sans-serif;color:#000;transform:scaleX(0.9932);">Hi<u>s</u>tory</div>
<div class="tx ss" style="left:161.0px;top:30.00px;font:normal 11px 'Liberation Sans', sans-serif;color:#000;transform:scaleX(0.9267);"><u>B</u>ookmarks</div>
<div class="tx ss" style="left:228.5px;top:30.00px;font:normal 11px 'Liberation Sans', sans-serif;color:#000;transform:scaleX(0.9343);"><u>T</u>ools</div>
<div class="tx ss" style="left:268.0px;top:30.00px;font:normal 11px 'Liberation Sans', sans-serif;color:#000;transform:scaleX(0.9275);"><u>H</u>elp</div>
<div class="tx ss" style="left:24.0px;top:55.00px;font:normal 11px 'Liberation Sans', sans-serif;color:#000;transform:scaleX(0.9530);">Attachment Submission Form</div>
<div class="tx ss" style="left:271.8px;top:55.00px;font:normal 11px 'Liberation Sans', sans-serif;color:#000;transform:scaleX(0.9223);">FCC TCB Electronic Filing Site</div>
<div class="tx ss" style="left:522.0px;top:55.00px;font:normal 11px 'Liberation Sans', sans-serif;color:#000;transform:scaleX(0.9010);">TCB Form 731</div>
<div class="tx ss" style="left:770.7px;top:55.00px;font:normal 11px 'Liberation Sans', sans-serif;color:#000;transform:scaleX(0.9841);">google api to get map for specified locati...</div>
<div class="tx ss" style="left:761.5px;top:85.00px;font:normal 11px 'Liberation Sans', sans-serif;color:#000;transform:scaleX(0.9918);clip-path:inset(0 0 0 0);">map for specified location or cit</div>
<div class="tx ss" style="left:66.9px;top:85.00px;font:normal 11px 'Liberation Sans', sans-serif;color:#000;transform:scaleX(0.9905);">file:///C:/OET/PRA-Audit-Form-731-mockups/part1731.html</div>
<div class="tx ss" style="left:23.8px;top:115.00px;font:normal 11px 'Liberation Sans', sans-serif;color:#000;transform:scaleX(0.9411);">Most Visited</div>
<div class="tx ss" style="left:107.8px;top:115.00px;font:normal 11px 'Liberation Sans', sans-serif;color:#000;transform:scaleX(0.9865);">Getting Started</div>
<div class="tx ss" style="left:208.9px;top:115.00px;font:normal 11px 'Liberation Sans', sans-serif;color:#000;transform:scaleX(0.9518);">Latest Headlines</div>
<div class="tx ss" style="left:314.5px;top:115.00px;font:normal 11px 'Liberation Sans', sans-serif;color:#000;transform:scaleX(0.9256);">Customize Links</div>
<div class="tx ss" style="left:416.4px;top:115.00px;font:normal 11px 'Liberation Sans', sans-serif;color:#000;transform:scaleX(0.9481);">Free Hotmail</div>
<div class="tx ss" style="left:504.0px;top:115.00px;font:normal 11px 'Liberation Sans', sans-serif;color:#000;transform:scaleX(0.9573);">Windows Marketplace</div>
<div class="tx ss" style="left:634.5px;top:115.00px;font:normal 11px 'Liberation Sans', sans-serif;color:#000;transform:scaleX(0.9492);">Windows Media</div>
<div class="tx ss" style="left:735.7px;top:115.00px;font:normal 11px 'Liberation Sans', sans-serif;color:#000;transform:scaleX(0.9524);">Windows</div>
<div class="tx ss" style="left:806.7px;top:115.00px;font:normal 11px 'Liberation Sans', sans-serif;color:#000;transform:scaleX(0.9849);">Computech, Inc. - Tim...</div>
<div class="tx" style="left:336.0px;top:151.00px;font:bold 21px 'Liberation Serif', serif;color:#000;transform:scaleX(0.9796);">Federal Communications Commission</div>
<div class="tx" style="left:206.0px;top:200.00px;font:normal 14.67px 'Liberation Serif', serif;color:#000;transform:scaleX(0.9793);-webkit-text-stroke:0.3px #000;">FEDERAL COMMUNICATIONS COMMISSION - FCC FORM 731</div>
<div class="tx" style="left:244.5px;top:218.00px;font:normal 14.67px 'Liberation Serif', serif;color:#000;transform:scaleX(0.9750);-webkit-text-stroke:0.3px #000;">APPLICATION FOR EQUIPMENT AUTHORIZATION</div>
<div class="tx sf" style="left:854.3px;top:200.00px;font:bold 12.5px 'Liberation Serif', serif;color:#000;transform:scaleX(0.9115);">Approved by OMB</div>
<div class="tx sf" style="left:872.8px;top:216.00px;font:bold 12.5px 'Liberation Serif', serif;color:#000;transform:scaleX(0.9500);">3060 - 0057</div>
<div class="tx sf" style="left:9.0px;top:316.00px;font:bold 12px 'Liberation Serif', serif;color:#000;transform:scaleX(1.0236);">Applicant's complete, legal business name:</div>
<div class="tx" style="left:239.0px;top:314.00px;font:bold 15px 'Liberation Serif', serif;color:#000080;transform:scaleX(0.9207);">Marubishi Toy Co Ltd</div>
<div class="tx sf" style="left:9.0px;top:334.00px;font:bold 12px 'Liberation Serif', serif;color:#000;transform:scaleX(1.0057);">Applicant's mailing address</div>
<div class="tx sf" style="left:9.0px;top:352.00px;font:bold 12px 'Liberation Serif', serif;color:#000;transform:scaleX(0.9988);">Line 1:</div>
<div class="tx" style="left:59.0px;top:350.00px;font:bold 15px 'Liberation Serif', serif;color:#000080;transform:scaleX(0.9680);">my line one</div>
<div class="tx sf" style="left:9.0px;top:370.00px;font:bold 12px 'Liberation Serif', serif;color:#000;transform:scaleX(0.9988);">Line 2:</div>
<div class="tx" style="left:59.0px;top:368.00px;font:bold 15px 'Liberation Serif', serif;color:#000080;transform:scaleX(0.9491);">my line wto</div>
<div class="tx sf" style="left:9.0px;top:388.00px;font:bold 12px 'Liberation Serif', serif;color:#000;transform:scaleX(0.9877);">P.O.Box:</div>
<div class="tx" style="left:58.0px;top:386.00px;font:bold 15px 'Liberation Serif', serif;color:#000080;transform:scaleX(0.9210);">po_box</div>
<div class="tx sf" style="left:10.0px;top:406.00px;font:bold 12px 'Liberation Serif', serif;color:#000;transform:scaleX(0.9769);">City:</div>
<div class="tx" style="left:61.0px;top:404.00px;font:bold 15px 'Liberation Serif', serif;color:#000080;transform:scaleX(0.9370);">Ellicott City</div>
<div class="tx sf" style="left:9.7px;top:424.00px;font:bold 12px 'Liberation Serif', serif;color:#000;transform:scaleX(1.0200);">State:</div>
<div class="tx" style="left:60.2px;top:422.00px;font:bold 15px 'Liberation Serif', serif;color:#000080;transform:scaleX(0.8929);">Maryland</div>
<div class="tx sf" style="left:128.8px;top:424.00px;font:bold 12px 'Liberation Serif', serif;color:#000;transform:scaleX(0.9927);">Country:</div>
<div class="tx" style="left:180.0px;top:422.00px;font:bold 15px 'Liberation Serif', serif;color:#000080;transform:scaleX(0.9541);">United States</div>
<div class="tx sf" style="left:282.6px;top:424.00px;font:bold 12px 'Liberation Serif', serif;color:#000;transform:scaleX(0.9844);">Zip/Postal Code:</div>
<div class="tx" style="left:372.6px;top:422.00px;font:bold 15px 'Liberation Serif', serif;color:#000080;transform:scaleX(0.8827);">21043</div>
<div class="tx sf" style="left:9.0px;top:444.00px;font:bold 12px 'Liberation Serif', serif;color:#000;transform:scaleX(0.9778);">FCC ID:</div>
<div class="tx sf" style="left:61.0px;top:444.00px;font:bold 12px 'Liberation Serif', serif;color:#000;transform:scaleX(0.9818);">Grantee code:</div>
<div class="tx" style="left:142.9px;top:442.00px;font:bold 15px 'Liberation Serif', serif;color:#000080;transform:scaleX(0.8071);">EAT</div>
<div class="tx sf" style="left:181.0px;top:444.00px;font:bold 12px 'Liberation Serif', serif;color:#000;transform:scaleX(0.9952);">* Equipment Product Code (14 characters maximum):</div>
<div class="tx" style="left:462.8px;top:442.00px;font:bold 15px 'Liberation Serif', serif;color:#000080;transform:scaleX(0.8373);">TREES</div>
<div class="tx sf" style="left:9.3px;top:464.00px;font:bold 12px 'Liberation Serif', serif;color:#000080;transform:scaleX(1.0099);">TCB Application Email Address:</div>
<div class="tx sf" style="left:184.0px;top:462.00px;font:bold 12px 'Liberation Serif', serif;color:#000;">*</div>
<div class="tx sf" style="left:9.0px;top:503.00px;font:bold 12px 'Liberation Serif', serif;color:#000080;transform:scaleX(1.0053);">TCB Scope:</div>
<div class="tx sf" style="left:76.0px;top:501.00px;font:bold 12px 'Liberation Serif', serif;color:#000;">*</div>
<div class="tx sf" style="left:9.0px;top:540.00px;font:bold 12px 'Liberation Serif', serif;color:#000;transform:scaleX(1.0039);">Person at the applicant's address to receive grant or for contact:</div>
<div class="tx sf" style="left:9.0px;top:558.00px;font:bold 12px 'Liberation Serif', serif;color:#000;transform:scaleX(1.0058);">First Name:</div>
<div class="tx" style="left:77.1px;top:556.00px;font:bold 15px 'Liberation Serif', serif;color:#000080;transform:scaleX(0.9201);">William</div>
<div class="tx" style="left:141.0px;top:556.00px;font:bold 15px 'Liberation Serif', serif;color:#000080;transform:scaleX(0.8397);">M</div>
<div class="tx sf" style="left:9.0px;top:576.00px;font:bold 12px 'Liberation Serif', serif;color:#000;transform:scaleX(0.9957);">Last Name:</div>
<div class="tx" style="left:77.7px;top:574.00px;font:bold 15px 'Liberation Serif', serif;color:#000080;transform:scaleX(0.8867);">Schwartz</div>
<div class="tx sf" style="left:9.0px;top:594.00px;font:bold 12px 'Liberation Serif', serif;color:#000;transform:scaleX(1.0619);">Title:</div>
<div class="tx" style="left:79.1px;top:592.00px;font:bold 15px 'Liberation Serif', serif;color:#000080;transform:scaleX(0.9390);">Task Lead</div>
<div class="tx sf" style="left:9.0px;top:612.00px;font:bold 12px 'Liberation Serif', serif;color:#000;transform:scaleX(0.9956);">E-mail:</div>
<div class="tx" style="left:77.7px;top:610.00px;font:bold 15px 'Liberation Serif', serif;color:#000080;transform:scaleX(0.9638);">email@email.com</div>
<div class="tx sf" style="left:652.0px;top:558.00px;font:bold 12px 'Liberation Serif', serif;color:#000;transform:scaleX(1.0176);">Mail Stop:</div>
<div class="tx" style="left:715.9px;top:556.00px;font:bold 15px 'Liberation Serif', serif;color:#000080;transform:scaleX(0.9342);">mail_stop</div>
<div class="tx sf" style="left:652.0px;top:576.00px;font:bold 12px 'Liberation Serif', serif;color:#000;transform:scaleX(1.0456);">Telephone:</div>
<div class="tx" style="left:714.9px;top:574.00px;font:bold 15px 'Liberation Serif', serif;color:#000080;transform:scaleX(0.9162);">3456789</div>
<div class="tx sf" style="left:788.0px;top:576.00px;font:bold 12px 'Liberation Serif', serif;color:#000;transform:scaleX(0.9364);">Ext:</div>
<div class="tx" style="left:812.7px;top:574.00px;font:bold 15px 'Liberation Serif', serif;color:#000080;transform:scaleX(0.9111);">567</div>
<div class="tx sf" style="left:652.0px;top:594.00px;font:bold 12px 'Liberation Serif', serif;color:#000;transform:scaleX(0.9829);">Fax No:</div>
<div class="tx" style="left:716.3px;top:592.00px;font:bold 15px 'Liberation Serif', serif;color:#000080;transform:scaleX(0.9378);">123123</div>
<div class="tx sf" style="left:9.0px;top:630.00px;font:bold 12px 'Liberation Serif', serif;color:#000;transform:scaleX(1.0148);">Instead of Applicant, FCC is authorized to mail original Grant to:</div>
<div class="tx sf" style="left:9.0px;top:646.00px;font:bold 12px 'Liberation Serif', serif;color:#000;transform:scaleX(0.9971);">Firm Name:</div>
<div class="tx sf" style="left:9.0px;top:683.00px;font:bold 12px 'Liberation Serif', serif;color:#000;transform:scaleX(0.9911);">Address Line 1:</div>
<div class="tx sf" style="left:284.0px;top:683.00px;font:bold 12px 'Liberation Serif', serif;color:#000;transform:scaleX(0.9986);">P.O.Box:</div>
<div class="tx sf" style="left:9.0px;top:719.00px;font:bold 12px 'Liberation Serif', serif;color:#000;transform:scaleX(0.9911);">Address Line 2:</div>
<div class="tx sf" style="left:284.0px;top:719.00px;font:bold 12px 'Liberation Serif', serif;color:#000;transform:scaleX(0.9769);">City:</div>
<div class="tx ss" style="left:35.0px;top:742.00px;font:italic bold 19px 'Liberation Sans', sans-serif;color:#fff;transform:scaleX(0.9105);text-shadow:1px 1px 1px #1a4a1a;filter:none;">start</div>
<div class="tx ss" style="left:968.4px;top:747.00px;font:normal 11px 'Liberation Sans', sans-serif;color:#fff;transform:scaleX(0.9519);">1:38 PM</div>
<div class="tx ss" style="left:356.0px;top:747.00px;font:normal 11px 'Liberation Sans', sans-serif;color:#ffc850;">7</div>
<div class="tx ss" style="left:415.0px;top:747.00px;font:normal 11px 'Liberation Sans', sans-serif;color:#ffc850;">2</div>
<div class="tx ss" style="left:474.0px;top:747.00px;font:normal 11px 'Liberation Sans', sans-serif;color:#ffc850;">2</div>
<div class="tx ss" style="left:534.0px;top:747.00px;font:normal 11px 'Liberation Sans', sans-serif;color:#fff;">J...</div>
<div class="tx ss" style="left:592.0px;top:747.00px;font:normal 11px 'Liberation Sans', sans-serif;color:#fff;">E..</div>
<div class="tx ss" style="left:651.0px;top:747.00px;font:normal 11px 'Liberation Sans', sans-serif;color:#fff;">T..</div>
<div class="tx ss" style="left:710.0px;top:747.00px;font:normal 11px 'Liberation Sans', sans-serif;color:#fff;">T..</div>
<div class="tx ss" style="left:769.0px;top:747.00px;font:normal 11px 'Liberation Sans', sans-serif;color:#fff;">d..</div>
<div class="tx ss" style="left:828.0px;top:747.00px;font:normal 11px 'Liberation Sans', sans-serif;color:#fff;">f...</div>
<div class="tx ss" style="left:887.0px;top:747.00px;font:normal 11px 'Liberation Sans', sans-serif;color:#fff;">T..</div>
</body></html>
